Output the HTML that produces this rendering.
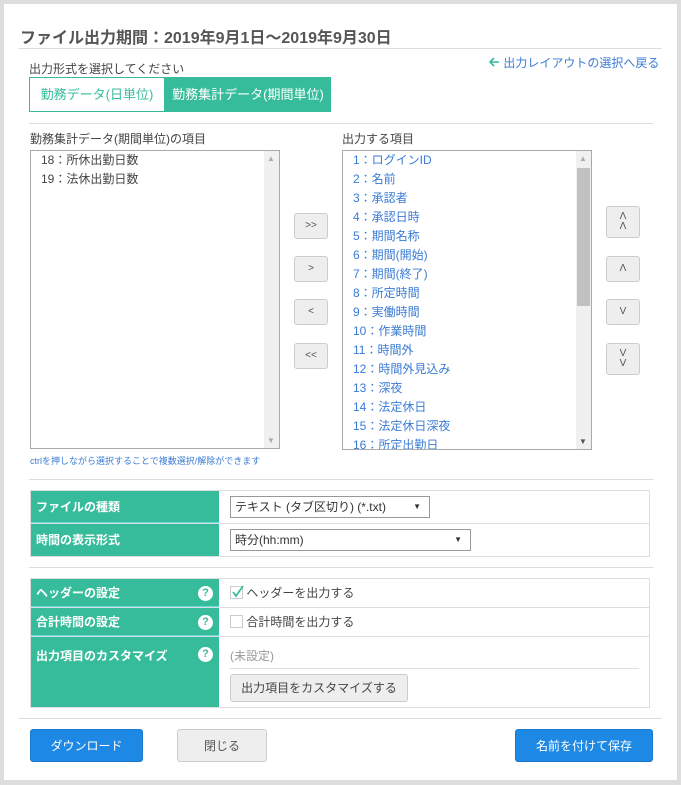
<!DOCTYPE html>
<html><head><meta charset="utf-8"><style>
*{box-sizing:border-box;margin:0;padding:0}
body{width:681px;height:785px;background:#ddd;font-family:"Liberation Sans","Noto Sans CJK JP",sans-serif;font-size:12px;color:#444;position:relative;overflow:hidden}
.p{position:absolute;left:4px;top:4px;width:673px;height:776px;background:#fff}
.a{position:absolute;white-space:nowrap}
.hr{position:absolute;height:1px;background:#ddd}
.list{position:absolute;border:1px solid #aaa;background:#fff;overflow:hidden}
.list div{height:19px;line-height:19px;padding-left:10px;font-size:12px}
.sb{position:absolute;right:0;top:0;bottom:0;width:15px;background:#f0f0f0}
.btn{position:absolute;width:34px;background:#eee;border:1px solid #ccc;border-radius:3px;font-size:10px;color:#555;text-align:center;display:flex;flex-direction:column;justify-content:center;line-height:10px}
.tbl{position:absolute;left:30px;width:620px;border:1px solid #ddd}
.row{display:flex;border-bottom:1px solid #ddd;position:relative}
.row:last-child{border-bottom:none}
.lab{width:188px;background:#37bc9b;color:#fff;font-weight:bold;font-size:12px;padding-left:5px;position:relative;border-bottom:1px solid #6dd}
.row:last-child .lab{border-bottom:none}
.q{position:absolute;left:167px;width:15px;height:15px;border-radius:50%;background:#fff;color:#37bc9b;font-size:11px;text-align:center;line-height:15px;font-weight:bold}
.val{flex:1;padding-left:11px;position:relative}
.sel{position:absolute;border:1px solid #999;background:#fff;height:22px;line-height:20px;padding-left:4px;font-size:12px;color:#333}
.sel:after{content:"▼";position:absolute;right:8px;font-size:8px;color:#333}
.b{position:absolute;height:33px;border-radius:3px;text-align:center;line-height:33px;font-size:12px}
.blue{background:#1e88e5;color:#fff;border:1px solid #1a7ad0}
</style></head><body>
<div class="p"></div>
<div class="a" style="left:20px;top:24px;font-size:16px;font-weight:bold;color:#555">ファイル出力期間：2019年9月1日～2019年9月30日</div>
<div class="hr" style="left:19px;top:48px;width:643px"></div>
<div class="a" style="left:29px;top:60px;color:#444">出力形式を選択してください</div>
<div class="a" style="left:488px;top:54px;color:#3a7bd5"><svg width="12" height="12" viewBox="0 0 12 12" style="vertical-align:-1px"><path d="M11 6H2M6 2L2 6l4 4" fill="none" stroke="#37bc9b" stroke-width="1.6"/></svg> 出力レイアウトの選択へ戻る</div>
<div class="a" style="left:29px;top:77px;width:136px;height:35px;border:1px solid #37bc9b;color:#37bc9b;line-height:33px;text-align:center;font-size:13px">勤務データ(日単位)</div>
<div class="a" style="left:165px;top:77px;width:166px;height:35px;background:#37bc9b;color:#fff;line-height:35px;text-align:center;font-size:13px">勤務集計データ(期間単位)</div>
<div class="hr" style="left:29px;top:123px;width:624px"></div>
<div class="a" style="left:30px;top:130px">勤務集計データ(期間単位)の項目</div>
<div class="a" style="left:342px;top:130px">出力する項目</div>
<div class="list" style="left:30px;top:150px;width:250px;height:299px;color:#444"><div>18：所休出勤日数</div><div>19：法休出勤日数</div><span class="sb"><span class="a" style="top:3px;left:3px;font-size:8px;color:#aaa">▲</span><span class="a" style="bottom:3px;left:3px;font-size:8px;color:#aaa">▼</span></span></div>
<div class="list" style="left:342px;top:150px;width:250px;height:300px;color:#3a7bd5">
<div>1：ログインID</div><div>2：名前</div><div>3：承認者</div><div>4：承認日時</div><div>5：期間名称</div><div>6：期間(開始)</div><div>7：期間(終了)</div><div>8：所定時間</div><div>9：実働時間</div><div>10：作業時間</div><div>11：時間外</div><div>12：時間外見込み</div><div>13：深夜</div><div>14：法定休日</div><div>15：法定休日深夜</div><div>16：所定出勤日</div>
<span class="sb"><span class="a" style="top:3px;left:3px;font-size:8px;color:#aaa">▲</span><span class="a" style="top:17px;left:1px;width:13px;height:138px;background:#c1c1c1"></span><span class="a" style="bottom:3px;left:3px;font-size:8px;color:#555">▼</span></span></div>
<div class="btn" style="left:294px;top:213px;height:26px">&gt;&gt;</div>
<div class="btn" style="left:294px;top:256px;height:26px">&gt;</div>
<div class="btn" style="left:294px;top:299px;height:26px">&lt;</div>
<div class="btn" style="left:294px;top:343px;height:26px">&lt;&lt;</div>
<div class="btn" style="left:606px;top:206px;height:32px">Λ<br>Λ</div>
<div class="btn" style="left:606px;top:256px;height:26px">Λ</div>
<div class="btn" style="left:606px;top:299px;height:26px">V</div>
<div class="btn" style="left:606px;top:343px;height:32px">V<br>V</div>
<div class="a" style="left:30px;top:454px;font-size:9px;color:#3a7bd5">ctrlを押しながら選択することで複数選択/解除ができます</div>
<div class="hr" style="left:29px;top:479px;width:624px"></div>
<div class="tbl" style="top:490px;height:67px">
<div class="row" style="height:33px"><div class="lab" style="line-height:32px">ファイルの種類</div><div class="val"><div class="sel" style="left:11px;top:5px;width:200px">テキスト (タブ区切り) (*.txt)</div></div></div>
<div class="row" style="height:32px"><div class="lab" style="line-height:32px">時間の表示形式</div><div class="val"><div class="sel" style="left:11px;top:5px;width:241px">時分(hh:mm)</div></div></div>
</div>
<div class="hr" style="left:29px;top:567px;width:624px"></div>
<div class="tbl" style="top:578px;height:130px">
<div class="row" style="height:29px"><div class="lab" style="line-height:28px">ヘッダーの設定<span class="q" style="top:7px">?</span></div><div class="val" style="line-height:28px"><span style="display:inline-block;width:13px;height:13px;border:1px solid #ccc;vertical-align:-2px;position:relative"><svg width="13" height="13" viewBox="0 0 13 13" style="position:absolute;left:0;top:-2px"><path d="M2 7l3 4 7-10" fill="none" stroke="#37bc9b" stroke-width="1.8"/></svg></span> ヘッダーを出力する</div></div>
<div class="row" style="height:29px"><div class="lab" style="line-height:28px">合計時間の設定<span class="q" style="top:7px">?</span></div><div class="val" style="line-height:28px"><span style="display:inline-block;width:13px;height:13px;border:1px solid #ccc;vertical-align:-2px"></span> 合計時間を出力する</div></div>
<div class="row" style="height:70px"><div class="lab" style="padding-top:10px">出力項目のカスタマイズ<span class="q" style="top:10px">?</span></div><div class="val"><div class="a" style="left:11px;top:10px;color:#999">(未設定)</div><div class="hr" style="left:11px;top:31px;width:409px"></div><div class="a" style="left:11px;top:37px;width:178px;height:28px;background:#eee;border:1px solid #ccc;border-radius:3px;text-align:center;line-height:26px;color:#444">出力項目をカスタマイズする</div></div></div>
</div>
<div class="hr" style="left:19px;top:718px;width:643px"></div>
<div class="b blue" style="left:30px;top:729px;width:113px">ダウンロード</div>
<div class="b" style="left:177px;top:729px;width:90px;background:#eee;border:1px solid #ccc;color:#555">閉じる</div>
<div class="b blue" style="left:515px;top:729px;width:138px">名前を付けて保存</div>
</body></html>
